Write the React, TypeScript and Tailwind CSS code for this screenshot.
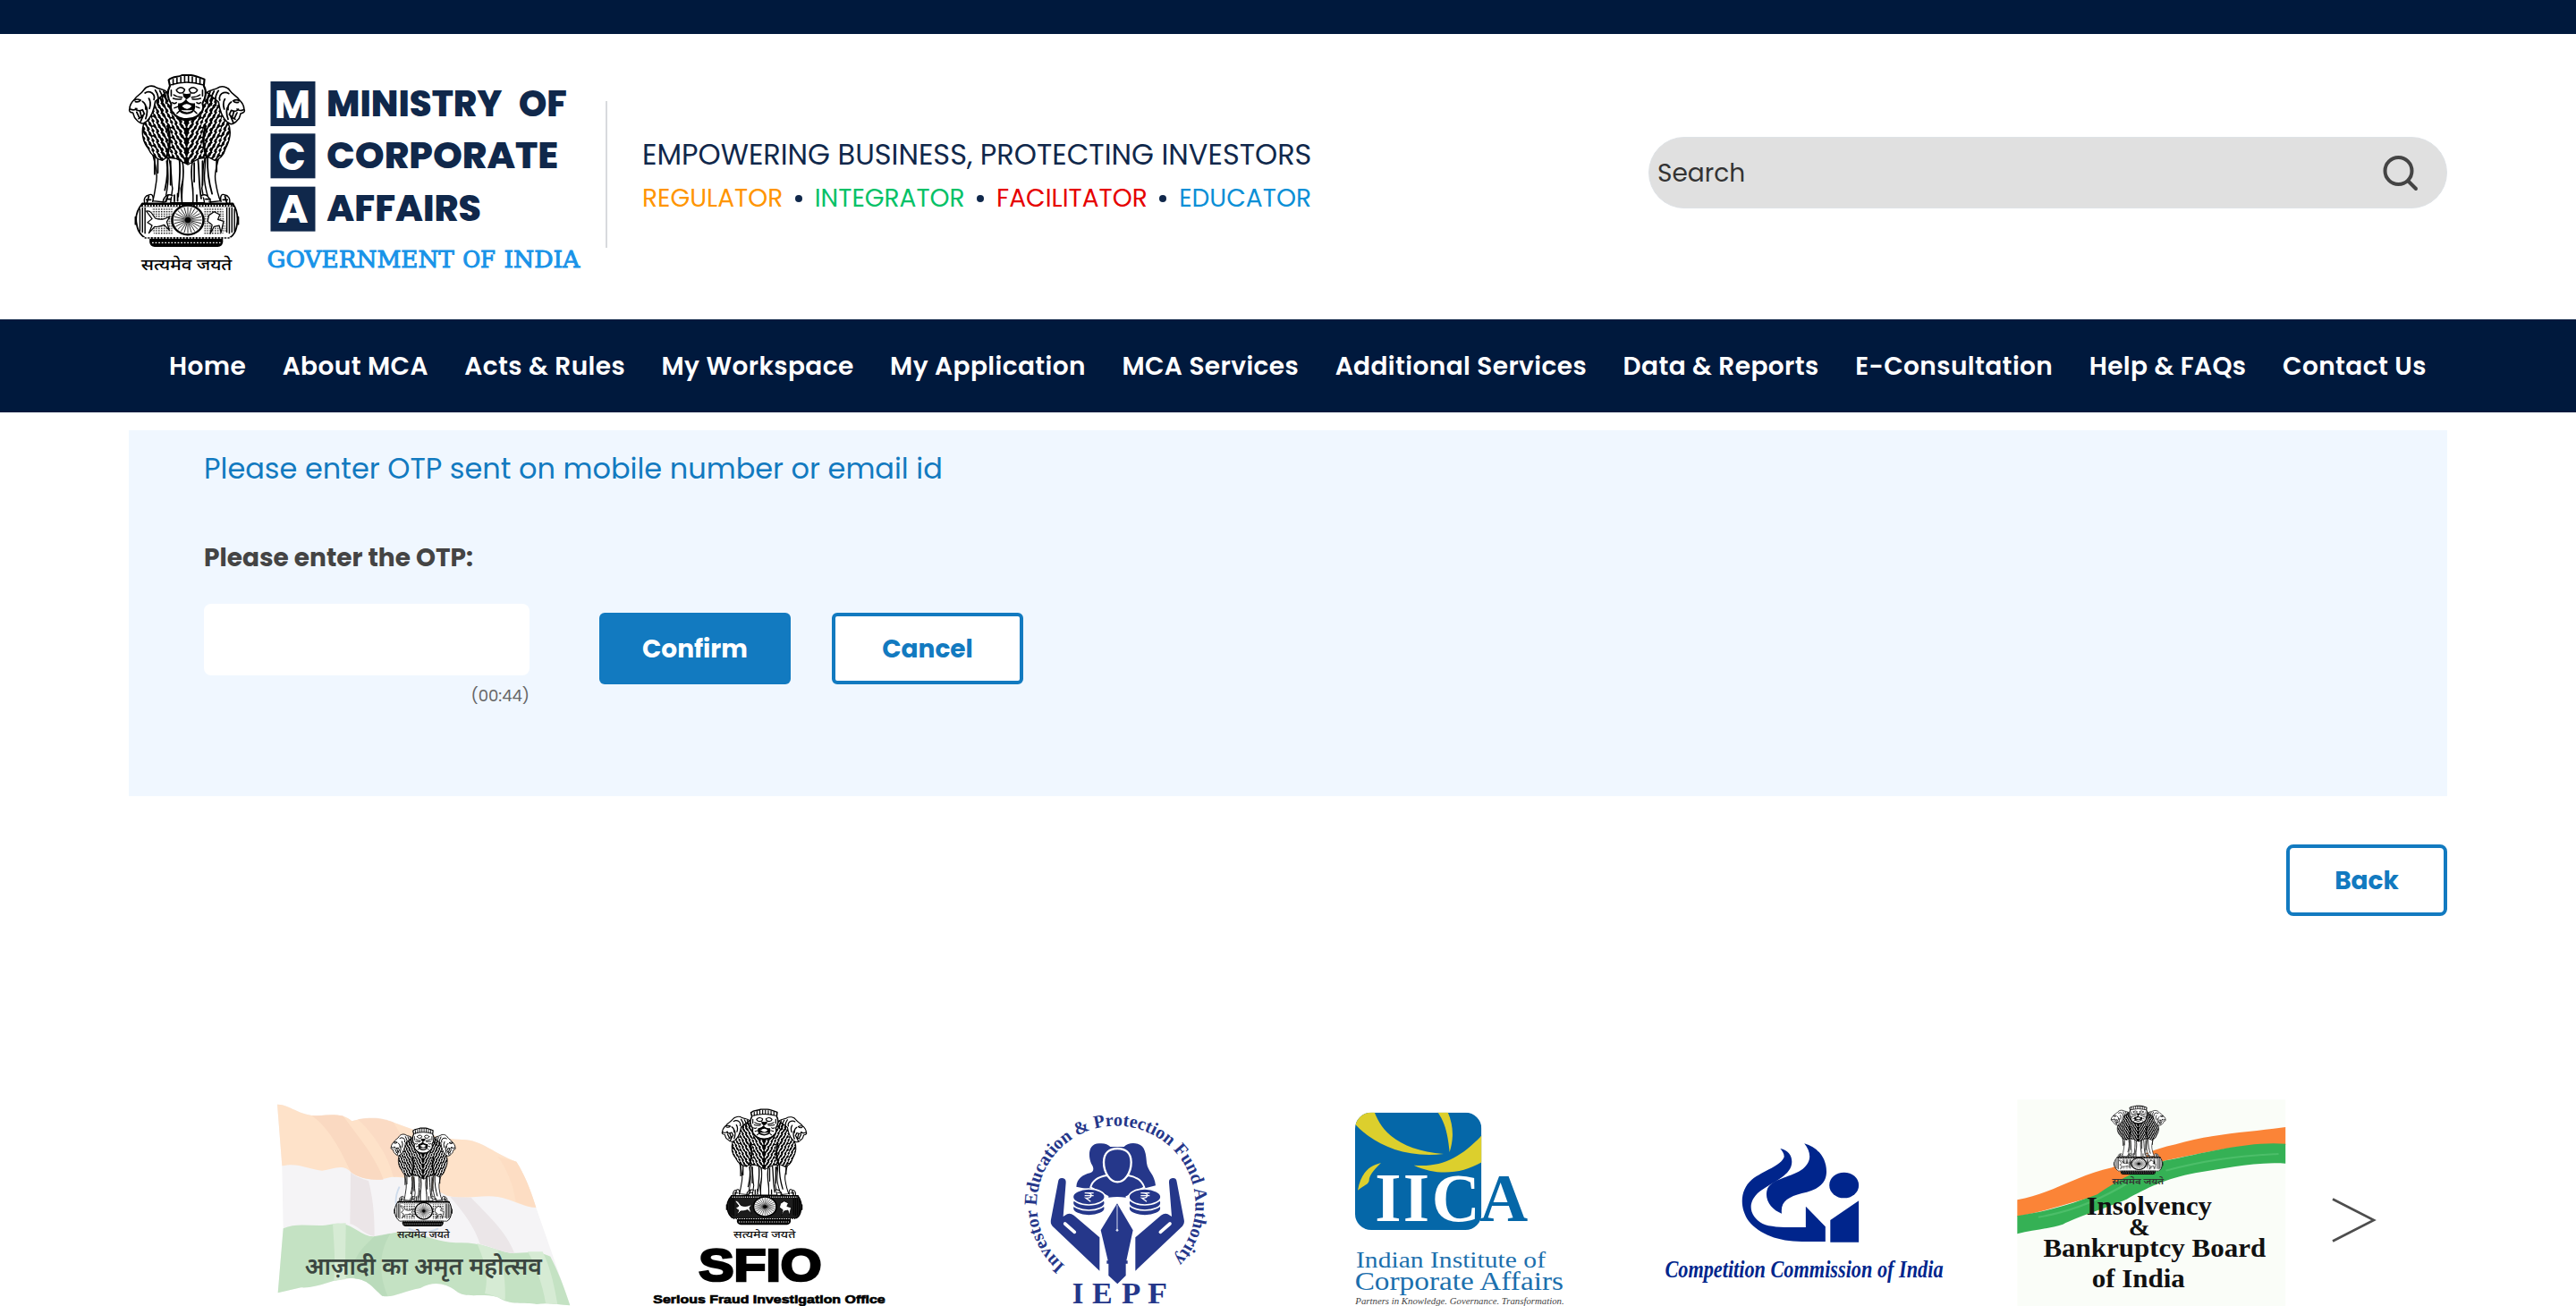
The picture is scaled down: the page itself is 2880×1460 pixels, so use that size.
import React from 'react';

const NAV = [
  'Home',
  'About MCA',
  'Acts & Rules',
  'My Workspace',
  'My Application',
  'MCA Services',
  'Additional Services',
  'Data & Reports',
  'E-Consultation',
  'Help & FAQs',
  'Contact Us',
];

const NAVY = '#10284b';

/** Rows of short slanted strokes, mirrored about the vertical axis, for the lions' manes. */
function maneStrokes() {
  const d: string[] = [];
  for (let row = 0; row < 17; row++) {
    const y = 112 + row * 16.5;
    for (let col = 0; col < 12; col++) {
      const dx = 5 + col * 14.5 + (row % 2 ? 5 : 0);
      const drop = 10 - Math.abs((col % 4) - 1.5) * 5 - col * 1.2;
      d.push(`M${248 - dx} ${y + drop}q-1 -9 -8 -13`);
      d.push(`M${248 + dx} ${y + drop}q1 -9 8 -13`);
    }
  }
  return d.join('');
}

function spokes(cx: number, cy: number, r0: number, r1: number, n: number) {
  return Array.from({ length: n }, (_, i) => {
    const a = (i * 2 * Math.PI) / n;
    return `M${(cx + r0 * Math.cos(a)).toFixed(1)} ${(cy + r0 * Math.sin(a)).toFixed(1)}L${(cx + r1 * Math.cos(a)).toFixed(1)} ${(cy + r1 * Math.sin(a)).toFixed(1)}`;
  }).join('');
}

const MANE = maneStrokes();
const SPOKES = spokes(252, 558, 7, 44, 24);

function SideLion() {
  return (
    <g strokeLinejoin="round" strokeLinecap="round">
      <path
        d="M186 128C176 118 164 120 154 114C142 104 122 108 114 122C106 136 92 140 86 152C78 160 70 172 70 184C66 192 72 198 80 198C84 206 82 214 90 220C96 228 104 234 112 234L124 226C136 214 146 190 150 160Z"
        fill="#fff"
        stroke="#000"
        strokeWidth="4.5"
      />
      <path
        d="M84 156q10 -6 20 0q-6 8 -16 5M72 186q12 6 20 -2M88 184q6 12 22 4l6 14q-8 12 -18 16M92 196l8 18M102 192l4 16M110 160q12 8 10 26M118 132q10 -8 22 0q10 8 6 22M130 150q8 14 2 34M122 178q6 16 -2 40M104 228l8 -20M150 122q14 20 8 50M164 124q12 20 8 46M176 126q10 18 8 40"
        fill="none"
        stroke="#000"
        strokeWidth="5"
      />
    </g>
  );
}

function Emblem({ id, solid = false }: { id: string; solid?: boolean }) {
  return (
    <g>
      <defs>
        <clipPath id={`${id}-mane`}>
          <path d="M150 124C168 118 184 124 192 132L306 132C316 122 334 122 348 130L352 190L378 232C388 256 386 286 370 318C364 342 350 356 336 358L318 348L286 352L252 372L216 352L186 348L172 358C150 350 138 342 128 318C110 296 106 262 114 234L146 190Z" />
        </clipPath>
        <pattern id={`${id}-dots`} width="8" height="8" patternUnits="userSpaceOnUse">
          <rect width="8" height="8" fill="#fff" />
          <rect width="4" height="4" fill="#000" />
        </pattern>
      </defs>
      {/* legs and paws */}
      <g fill="#fff" stroke="#000" strokeWidth="4" strokeLinejoin="round" strokeLinecap="round">
        <path d="M142 336C148 366 158 394 154 424C150 452 148 474 142 494L180 498C184 470 192 440 190 408L188 344Z" />
        <path d="M352 336C346 366 334 394 338 424C342 452 346 474 354 494L320 498C312 470 302 440 304 408L308 344Z" />
        <path d="M190 344C204 380 198 420 204 452L198 500H234L230 452C240 420 240 380 232 344Z" />
        <path d="M308 344C294 380 302 420 296 452L304 500H266L268 452C262 420 262 380 268 344Z" />
        <path d="M236 364C244 410 230 450 234 500H268C272 450 256 410 266 364Z" />
        <path d="M118 504C112 488 118 476 130 474C140 468 146 478 142 496M174 498C176 480 190 468 204 476M382 504C386 488 380 476 368 474C358 468 352 478 356 496M324 498C320 480 308 468 294 476" />
      </g>
      <path
        d="M148 350V404M158 350V400M186 360C192 400 186 430 180 458M198 360V440M226 360C230 400 224 440 222 480M272 366V430M284 356C288 400 286 440 294 486M298 360V440M314 352C312 400 320 440 328 470M342 350V396M122 490h14M184 488h14M210 474v22M220 470v24M280 474v22M308 488h14M362 490h14M130 478l-6 22M190 474l-6 22M368 478l6 22"
        fill="none"
        stroke="#000"
        strokeWidth="5"
        strokeLinecap="round"
      />
      {/* manes */}
      <g clipPath={`url(#${id}-mane)`}>
        <rect x="100" y="110" width="300" height="270" fill="#000" />
        <path d={MANE} fill="none" stroke="#fff" strokeWidth="5.6" strokeLinecap="round" />
        <path d="M188 240C200 280 196 320 182 356M308 240C296 280 300 320 314 356" fill="none" stroke="#000" strokeWidth="7" />
      </g>
      <path
        d="M114 234C106 262 110 296 128 318C138 342 150 350 172 358L186 348L216 352L252 372L286 352L318 348L336 358C350 356 364 342 370 318C386 286 388 256 378 232"
        fill="none"
        stroke="#000"
        strokeWidth="4"
      />
      <SideLion />
      <g transform="matrix(-1 0 0 1 498 2)">
        <SideLion />
      </g>
      {/* front face */}
      <g strokeLinejoin="round" strokeLinecap="round">
        <path d="M192 88C206 74 222 80 234 72H262C276 74 290 80 304 86L302 108C312 126 308 150 298 166C304 184 296 200 280 210C262 222 234 222 218 210C202 200 196 184 200 168C188 150 186 128 196 108Z" fill="#fff" stroke="#000" strokeWidth="6" />
        <path d="M206 86v18M218 82v16M230 78v18M242 76v18M254 76v18M266 78v18M278 80v18M290 84v18M200 104q48 -16 98 0" fill="none" stroke="#000" strokeWidth="4.5" />
        <path d="M216 122q12 -16 26 -2q-2 14 -16 12q-8 -2 -10 -10zM282 122q-12 -16 -26 -2q2 14 16 12q8 -2 10 -10z" fill="#fff" stroke="#000" strokeWidth="4.5" />
        <path d="M236 132q12 6 26 0l-2 12l-12 10l-10 -10zM222 166q14 2 24 -14q10 18 28 14q4 22 -8 32q-18 10 -36 0q-12 -10 -8 -32z" fill="#000" />
        <path d="M236 176q12 -12 26 0q-12 16 -26 0zM234 190q16 10 30 0" fill="#fff" stroke="#fff" strokeWidth="3" />
        <path d="M208 138q10 8 26 8M206 150q12 4 26 2M290 138q-10 8 -26 8M292 150q-12 4 -26 2M204 164q6 6 12 0M210 182l10 -4M218 200l8 -8M292 164q-6 6 -12 0M288 182l-10 -4M280 200l-8 -8M200 122v20M298 122v20M206 196q10 26 42 28q34 -2 44 -28" fill="none" stroke="#000" strokeWidth="4.5" />
      </g>
      {/* drum and wheel */}
      <path d="M110 502H392C404 520 410 545 406 572C404 594 394 612 382 618H118C104 608 94 592 92 572C86 545 96 520 110 502Z" fill={solid ? '#1c1c1c' : '#fff'} stroke="#000" strokeWidth="5" />
      {!solid && <path d="M140 518H204V606H148L136 590ZM302 518H362L372 596L356 606H302Z" fill={`url(#${id}-dots)`} />}
      <path d="M106 508H396" stroke="#000" strokeWidth="12" />
      <path d="M112 510H392" stroke="#fff" strokeWidth="6" strokeDasharray="4 5" />
      <path d="M102 520V596M110 516V600M118 516V604M398 520V596M390 516V600M382 516V604M374 516V600" stroke="#000" strokeWidth="4" />
      <path d="M88 548v24M410 548v24" stroke="#000" strokeWidth="5" strokeLinecap="round" />
      <path d="M122 528Q132 526 138 534L150 552Q164 558 178 554L196 546L186 564L194 592L178 574Q162 582 148 580L130 602L140 576L126 566L140 554Z" fill="#fff" stroke="#000" strokeWidth="3.5" strokeLinejoin="round" />
      <path d="M318 542L334 530L352 540L346 556L364 562L356 600L350 576L334 580L322 604L328 574L314 562Z" fill="#fff" stroke="#000" strokeWidth="3.5" strokeLinejoin="round" />
      <circle cx="252" cy="558" r="49" fill="#fff" stroke="#000" strokeWidth="7" />
      <path d={SPOKES} stroke="#000" strokeWidth="2.4" />
      <circle cx="252" cy="558" r="9" fill="#000" />
      <path d="M132 616H362V632Q360 646 346 648H148Q134 646 132 632Z" fill="#000" />
      <path d="M112 618H386M140 634H354" stroke="#fff" strokeWidth="4" strokeDasharray="5 5" />
    </g>
  );
}

type FitProps = {
  x: number;
  y: number;
  w: number;
  size: number;
  fill: string;
  font: string;
  weight?: number;
  italic?: boolean;
  children: string;
};

function Fit({ x, y, w, size, fill, font, weight = 400, italic, children }: FitProps) {
  return (
    <text
      x={x}
      y={y}
      textLength={w}
      lengthAdjust="spacingAndGlyphs"
      fontSize={size}
      fill={fill}
      fontFamily={font}
      fontWeight={weight}
      fontStyle={italic ? 'italic' : 'normal'}
    >
      {children}
    </text>
  );
}

const DEVA = '"Noto Sans Devanagari", "Noto Sans", sans-serif';
const SERIF = '"Liberation Serif", serif';
const SLAB = '"DejaVu Serif", serif';
const POPPINS = 'Poppins, Inter, sans-serif';

function McaLogo() {
  return (
    <svg className="h-[260px] w-[540px] shrink-0" viewBox="0 0 1512 780" preserveAspectRatio="none">
      <Emblem id="mca" />
      <Fit x={106} y={725} w={284} size={54} fill="#000" font={DEVA} weight={500}>सत्यमेव जयते</Fit>
      <g fill={NAVY}>
        <rect x="511" y="93" width="140" height="150" />
        <rect x="511" y="268" width="140" height="150" />
        <rect x="511" y="446" width="140" height="150" />
      </g>
      <Fit x={523} y={215} w={113} size={134} fill="#fff" font={POPPINS} weight={700}>M</Fit>
      <Fit x={535} y={389} w={86} size={130} fill="#fff" font={POPPINS} weight={700}>C</Fit>
      <Fit x={534} y={566} w={95} size={134} fill="#fff" font={POPPINS} weight={700}>A</Fit>
      <Fit x={686} y={209} w={550} size={120} fill={NAVY} font={POPPINS} weight={800}>MINISTRY</Fit>
      <Fit x={1287} y={209} w={152} size={120} fill={NAVY} font={POPPINS} weight={800}>OF</Fit>
      <Fit x={686} y={384} w={726} size={120} fill={NAVY} font={POPPINS} weight={800}>CORPORATE</Fit>
      <Fit x={687} y={560} w={483} size={120} fill={NAVY} font={POPPINS} weight={800}>AFFAIRS</Fit>
      <g stroke="#1893e8" strokeWidth="3">
        <Fit x={500} y={717} w={586} size={77} fill="#1893e8" font={SLAB}>GOVERNMENT</Fit>
        <Fit x={1112} y={717} w={103} size={77} fill="#1893e8" font={SLAB}>OF</Fit>
        <Fit x={1242} y={717} w={237} size={77} fill="#1893e8" font={SLAB}>INDIA</Fit>
      </g>
    </svg>
  );
}

function AmritLogo() {
  return (
    <svg className="h-[250px] w-[370px] shrink-0" viewBox="0 0 1110 750">
      <path d="M60 74C100 72 130 112 200 112C240 108 280 104 310 130C350 118 400 116 450 134C520 160 600 190 680 192C740 190 790 240 862 266C890 310 910 360 928 420L1042 748C1000 744 960 738 930 744C890 736 840 750 800 720C740 706 690 726 660 700C620 670 580 668 540 690C480 700 450 724 412 716C380 690 370 664 320 658C260 650 200 692 140 688L62 706L80 490L76 280Z" fill="#f5f4f6" />
      <path d="M60 74C100 72 130 112 200 112C240 108 280 104 310 130C350 118 400 116 450 134C520 160 600 190 680 192C740 190 790 240 862 266C890 310 910 360 928 420C880 418 850 392 800 384C740 376 690 396 630 380C570 350 500 310 440 318C400 330 350 330 310 304C280 270 250 292 210 296C160 290 130 268 76 280Z" fill="#fee2c9" />
      <path d="M80 490C130 466 190 488 240 476C300 462 320 500 370 516C420 520 450 496 510 500C570 520 600 534 660 538C740 534 780 560 840 572C880 574 930 560 976 584C1000 630 1024 690 1042 748C1000 744 960 738 930 744C890 736 840 750 800 720C740 706 690 726 660 700C620 670 580 668 540 690C480 700 450 724 412 716C380 690 370 664 320 658C260 650 200 692 140 688L62 706Z" fill="#c4e2c3" />
      <path d="M176 112C210 112 240 106 280 112C330 180 390 250 416 326C370 330 330 320 306 300C270 220 230 150 176 112Z" fill="#f8d6bd" opacity=".75" />
      <path d="M330 124C390 114 420 122 450 134C480 190 520 240 560 340C520 320 480 312 450 318C430 240 380 170 330 124Z" fill="#f9d9c2" opacity=".7" />
      <path d="M800 250L862 266C890 310 910 360 928 420C900 418 880 408 860 400C850 340 830 290 800 250Z" fill="#fbdabf" opacity=".6" />
      <path d="M306 302C340 326 360 326 366 330C384 400 386 460 386 516C350 510 330 480 304 474Z" fill="#ebe5e7" />
      <path d="M640 384L710 386C760 440 830 500 856 574C800 566 770 548 740 542C720 480 680 430 640 384Z" fill="#ebe6e8" />
      <path d="M246 474L290 472C290 540 286 600 290 660L250 666C256 600 250 540 246 474ZM730 540L800 562C820 620 826 670 824 730C800 722 780 712 756 708C770 650 756 600 730 540ZM900 568L950 568C980 630 990 690 1000 744L960 740C950 680 930 620 900 568Z" fill="#d6ebd4" />
      <path d="M320 658C300 600 340 560 386 516L440 506C400 570 400 640 430 716L412 716C380 690 370 664 320 658Z" fill="#b7d9b8" opacity=".7" />
      <path d="M470 350A110 110 0 0 0 470 450M500 490A110 110 0 0 0 600 490" fill="none" stroke="#cfdcec" strokeWidth="6" />
      <g transform="translate(400 112) scale(.6 .572)">
        <Emblem id="amrit" />
      </g>
      <Fit x={462} y={523} w={176} size={34} fill="#222" font={DEVA} weight={600}>सत्यमेव जयते</Fit>
      <Fit x={152} y={644} w={796} size={82} fill="#3b4640" font={DEVA} weight={600}>आज़ादी का अमृत महोत्सव</Fit>
    </svg>
  );
}

function SfioLogo() {
  return (
    <svg className="h-[250px] w-[320px] shrink-0" viewBox="0 0 960 750">
      <g transform="translate(268 42) scale(.785 .672)">
        <Emblem id="sfio" solid />
      </g>
      <Fit x={360} y={521} w={208} size={35} fill="#111" font={DEVA} weight={500}>सत्यमेव जयते</Fit>
      <g stroke="#000" strokeWidth="8">
        <Fit x={244} y={667} w={412} size={150} fill="#000" font='"Liberation Sans", sans-serif' weight={700}>SFIO</Fit>
      </g>
      <g stroke="#000" strokeWidth="2">
        <Fit x={91} y={740} w={778} size={40} fill="#000" font='"Liberation Sans", sans-serif' weight={700}>Serious Fraud Investigation Office</Fit>
      </g>
    </svg>
  );
}

function Coins({ x }: { x: number }) {
  return (
    <g fill="#25378a" stroke="#fff" strokeWidth="5">
      <ellipse cx={x} cy="422" rx="54" ry="25" />
      <ellipse cx={x} cy="404" rx="54" ry="25" />
      <ellipse cx={x} cy="384" rx="54" ry="27" />
      <path d={`M${x - 14} 371h30M${x - 14} 380h30M${x - 10} 371q20 0 18 9q-2 9 -18 8l16 12`} fill="none" stroke="#fff" strokeWidth="4" />
    </g>
  );
}

function IepfHand() {
  return (
    <>
      <path d="M189 334Q190 320 203 321Q216 322 215 336L206 450L212 446Q226 434 242 446L328 520V632L170 482Q162 474 165 460Z" />
      <path d="M212 474L244 502" stroke="#fff" strokeWidth="11" strokeLinecap="round" />
    </>
  );
}

function IepfLogo() {
  return (
    <svg className="h-[250px] w-[260px] shrink-0" viewBox="0 0 780 750">
      <defs>
        <path id="iepf-ring" d="M212 615A266 266 0 1 1 568 603" />
      </defs>
      <text fontFamily={SERIF} fontWeight="700" fontSize="61" fill="#25378a">
        <textPath href="#iepf-ring" textLength="1268" lengthAdjust="spacingAndGlyphs">
          Investor Education &amp; Protection Fund Authority
        </textPath>
      </text>
      <g fill="#25378a">
        <path d="M250 350C252 322 272 310 296 304C312 298 308 284 300 272C288 242 292 206 326 205C344 203 356 208 364 216L410 216C420 204 440 202 456 206C482 212 484 244 486 270C490 300 512 306 516 346L440 366H330Z" />
        <path d="M298 352C304 326 330 316 352 312L388 332L424 312C448 316 470 328 478 352L420 384H356Z" stroke="#fff" strokeWidth="6" />
        <path d="M342 268C342 236 362 222 388 222C414 222 434 236 434 268C434 304 412 334 388 334C364 334 342 304 342 268Z" stroke="#fff" strokeWidth="7" />
        <path d="M358 362H416V386Q388 382 358 386Z" />
        <Coins x={292} />
        <Coins x={480} />
        <IepfHand />
        <g transform="matrix(-1 0 0 1 776 0)">
          <IepfHand />
        </g>
        <path d="M387 406L440 496L418 598H422V608H416V648L388 676L358 648V608H352V598H356L332 496Z" />
        <path d="M387 412V496" stroke="#a9b1d6" strokeWidth="4" />
        <circle cx="387" cy="496" r="4" fill="#dfe3f3" />
      </g>
      <Fit x={236} y={742} w={38} size={104} fill="#25378a" font={SERIF} weight={700}>I</Fit>
      <Fit x={303} y={742} w={68} size={104} fill="#25378a" font={SERIF} weight={700}>E</Fit>
      <Fit x={402} y={742} w={64} size={104} fill="#25378a" font={SERIF} weight={700}>P</Fit>
      <Fit x={489} y={742} w={66} size={104} fill="#25378a" font={SERIF} weight={700}>F</Fit>
    </svg>
  );
}

function IicaLogo() {
  return (
    <svg className="h-[250px] w-[300px] shrink-0" viewBox="0 0 900 750">
      <defs>
        <clipPath id="iica-tile">
          <rect x="105" y="101" width="424" height="394" rx="54" />
        </clipPath>
      </defs>
      <g clipPath="url(#iica-tile)">
        <rect x="105" y="101" width="424" height="394" fill="#0567a8" />
        <g fill="#dccf2d">
          <path d="M105 140L120 100H170C200 180 270 228 402 240C260 256 160 200 105 140Z" />
          <path d="M382 100H416C436 146 436 190 422 234C416 180 410 140 382 100Z" />
          <path d="M302 278C400 286 460 250 530 178V268C460 308 380 314 302 278Z" />
          <path d="M192 270C150 280 124 306 114 362C134 346 150 342 152 330C152 310 172 290 192 270Z" />
        </g>
      </g>
      <Fit x={172} y={464} w={88} size={232} fill="#fff" font={SERIF} weight={700}>I</Fit>
      <Fit x={266} y={464} w={88} size={232} fill="#fff" font={SERIF} weight={700}>I</Fit>
      <Fit x={362} y={464} w={162} size={226} fill="#fff" font={SERIF} weight={700}>C</Fit>
      <Fit x={523} y={464} w={162} size={226} fill="#0567a8" font={SERIF} weight={700}>A</Fit>
      <Fit x={108} y={621} w={636} size={78} fill="#1c6fad" font={SERIF}>Indian Institute of</Fit>
      <Fit x={104} y={697} w={700} size={88} fill="#1c6fad" font={SERIF}>Corporate Affairs</Fit>
      <Fit x={106} y={745} w={700} size={30} fill="#444" font={SERIF} italic>Partners in Knowledge. Governance. Transformation.</Fit>
    </svg>
  );
}

function CciLogo() {
  return (
    <svg className="h-[250px] w-[400px] shrink-0" viewBox="0 0 729 750" preserveAspectRatio="none">
      <g fill="#00258c">
        <path d="M274 222C292 228 300 250 297 276C292 316 256 336 232 366C204 404 212 450 238 474C256 488 290 486 326 486V416L366 484V534H318C270 534 232 510 210 466C190 420 192 360 216 326C240 296 276 280 282 250C282 238 278 230 274 222Z" />
        <path d="M323 205C352 218 370 258 368 306C366 346 344 364 318 372C290 384 274 400 277 440C256 428 240 392 248 356C258 322 300 316 320 290C340 264 336 232 323 205Z" />
        <ellipse cx="404" cy="345" rx="30" ry="43" />
        <path d="M434 397V536H376V462Z" />
      </g>
      <Fit x={39} y={655} w={567} size={79} fill="#00258c" font={SERIF} weight={700} italic>Competition Commission of India</Fit>
    </svg>
  );
}

function IbbiLogo() {
  return (
    <svg className="h-[250px] w-[330px] shrink-0" viewBox="729 0 602 750" preserveAspectRatio="none">
      <rect x="757" y="58" width="547" height="692" fill="#fafdf8" />
      <path d="M757 394C830 372 880 310 950 286C1000 250 1030 226 1080 208C1150 172 1240 166 1304 150V210C1230 200 1140 234 1060 262C1000 300 960 330 920 380C870 400 820 430 757 450Z" fill="#fb8437" />
      <path d="M757 448C830 430 880 400 920 376C960 330 1010 286 1060 262C1140 236 1230 196 1304 206V272C1240 266 1180 290 1120 304C1060 322 1020 356 980 392C940 420 880 450 850 476C820 492 790 494 757 508Z" fill="#35b155" />
      <path d="M800 452C880 430 940 380 990 330M1060 296C1130 266 1200 246 1290 240" fill="none" stroke="#5cc777" strokeWidth="6" opacity=".6" />
      <g transform="translate(927 50) scale(.309 .4)">
        <Emblem id="ibbi" />
      </g>
      <Fit x={950} y={343} w={106} size={28} fill="#333" font={DEVA} weight={600}>सत्यमेव जयते</Fit>
      <Fit x={898} y={443} w={256} size={88} fill="#111" font={SERIF} weight={700}>Insolvency</Fit>
      <Fit x={984} y={513} w={44} size={84} fill="#111" font={SERIF} weight={700}>&amp;</Fit>
      <Fit x={810} y={586} w={454} size={90} fill="#111" font={SERIF} weight={700}>Bankruptcy Board</Fit>
      <Fit x={909} y={688} w={190} size={90} fill="#111" font={SERIF} weight={700}>of India</Fit>
    </svg>
  );
}

function Bullet() {
  return <span className="size-2 rounded-full bg-[#10284b]" />;
}

function Header() {
  return (
    <header className="flex h-[319px] items-start pl-[120px]">
      <div className="flex pt-[22px]">
        <McaLogo />
      </div>
      <div className="mt-[75px] ml-[17px] h-[164px] w-[2px] bg-[#d8dadd]" />
      <div className="mt-[111px] ml-[39px] flex w-[748px] flex-col text-[#10284b]">
        <p className="text-[32px] leading-[48px] whitespace-nowrap">EMPOWERING BUSINESS, PROTECTING INVESTORS</p>
        <p className="mt-px flex items-center justify-between text-[28px] leading-[48px]">
          <span className="text-[#ff9500]">REGULATOR</span>
          <Bullet />
          <span className="text-[#06c167]">INTEGRATOR</span>
          <Bullet />
          <span className="text-[#e60000]">FACILITATOR</span>
          <Bullet />
          <span className="text-[#0a8fd6]">EDUCATOR</span>
        </p>
      </div>
      <div className="mt-[115px] mr-36 ml-auto flex h-20 w-[893px] items-center justify-between rounded-full border border-[#dee2e6] bg-[#e0e0e0] pt-0.5 pr-[31px] pl-[9px]">
        <span className="text-[28px] text-[#333]">Search</span>
        <svg className="size-10" viewBox="0 0 40 40" fill="none" stroke="#444" strokeWidth="4" strokeLinecap="round">
          <circle cx="17.5" cy="17" r="15" />
          <path d="M28.5 28.5L37 37" />
        </svg>
      </div>
    </header>
  );
}

export default function App() {
  return (
    <div className="h-[1460px] w-[2880px] overflow-hidden bg-white font-[Poppins,Inter,sans-serif]">
      <div className="h-[38px] bg-[#00193d]" />
      <Header />
      <nav className="flex h-[104px] items-center justify-between bg-[#00193d] pt-0.5 pr-[167px] pl-[189px] text-[28px] font-semibold tracking-[0.4px] text-white">
        {NAV.map((item) => (
          <a key={item} className="whitespace-nowrap">{item}</a>
        ))}
      </nav>

      <main className="px-36 pt-5">
        <section className="h-[409px] bg-[#f0f7ff] px-[84px] pt-[19px]">
          <h1 className="text-[32px] leading-[48px] text-[#127ac0]">Please enter OTP sent on mobile number or email id</h1>
          <label className="mt-[55px] block text-[28px] leading-[42px] font-bold text-[#444]">Please enter the OTP:</label>
          <div className="mt-[30px] flex items-start">
            <div className="w-[364px]">
              <input className="block h-20 w-full rounded-lg bg-white" />
              <p className="mt-[9px] text-right text-[18px] leading-[28px] text-[#666]">(00:44)</p>
            </div>
            <button className="mt-2.5 ml-[78px] h-20 w-[214px] rounded-md bg-[#127ac0] pt-0.5 text-[28px] font-bold text-white">Confirm</button>
            <button className="mt-2.5 ml-[46px] h-20 w-[214px] rounded-md border-4 border-[#127ac0] bg-white pt-0.5 text-[28px] font-bold text-[#127ac0]">Cancel</button>
          </div>
        </section>
        <div className="flex justify-end pt-[54px]">
          <button className="h-20 w-[180px] rounded-lg border-4 border-[#127ac0] bg-white pt-0.5 text-[28px] font-bold text-[#127ac0]">Back</button>
        </div>
      </main>

      <section className="mt-[186px] flex h-[250px] pl-[290px]">
        <AmritLogo />
        <div className="ml-10 flex"><SfioLogo /></div>
        <div className="ml-[100px] flex"><IepfLogo /></div>
        <div className="ml-[100px] flex"><IicaLogo /></div>
        <div className="ml-[60px] flex"><CciLogo /></div>
        <IbbiLogo />
        <svg className="mt-[128px] ml-[36px] h-[52px] w-[54px]" viewBox="0 0 54 52" fill="none" stroke="#4d4d4d" strokeWidth="2.6">
          <path d="M2 2.5L48 26L2 49.5" />
        </svg>
      </section>
    </div>
  );
}
